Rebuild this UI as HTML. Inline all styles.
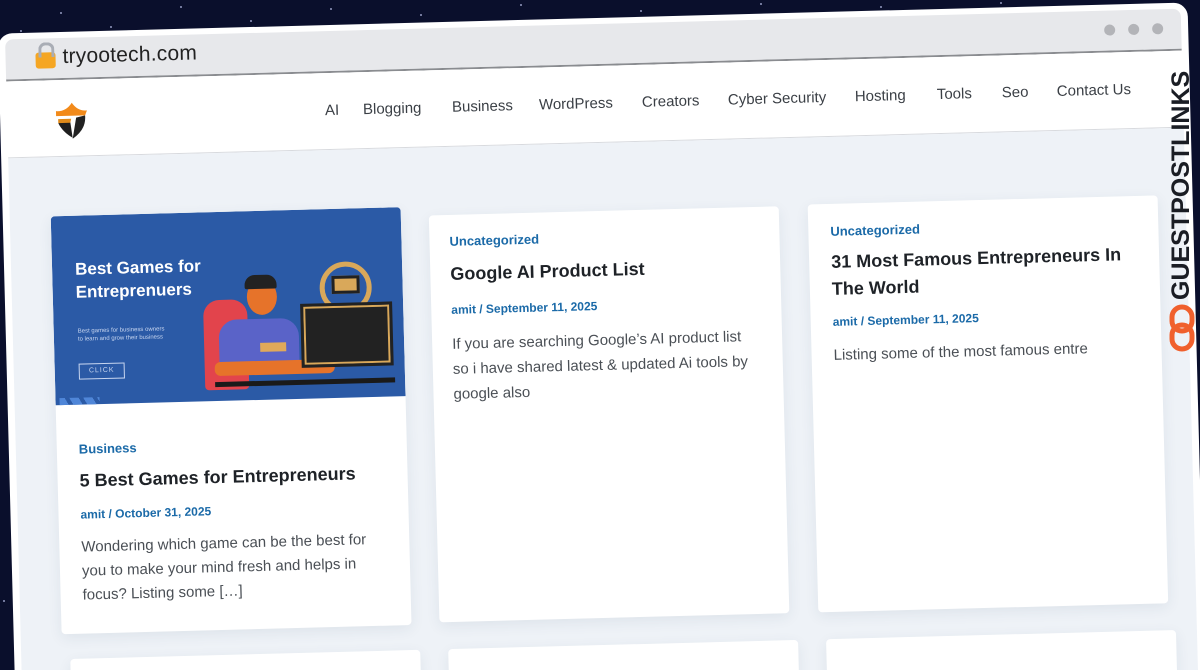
<!DOCTYPE html>
<html><head><meta charset="utf-8"><style>
*{margin:0;padding:0;box-sizing:border-box}
html,body{width:1200px;height:670px;overflow:hidden}
body{background:#0a0f2c;font-family:"Liberation Sans",sans-serif;position:relative}
.clip{position:absolute;left:0;top:0;width:1200px;height:670px;overflow:hidden}
.star{position:absolute;width:2px;height:2px;background:#cfd6ff;border-radius:50%;opacity:.7}
.page{position:absolute;left:0;top:0;width:1200px;height:670px;transform:rotate(-1.5deg);transform-origin:600px 335px}
.win{position:absolute;left:6px;top:18px;width:1190px;height:680px;background:#fff;border-radius:14px}
.tb{position:absolute;left:13px;top:24px;width:1176px;height:42px;background:#e7e8eb;border-radius:8px 8px 0 0;border-bottom:2px solid #8a8c90}
.url{position:absolute;left:70px;top:31px;font-size:21px;color:#222;letter-spacing:.2px}
.lock{position:absolute;left:43px;top:38px;width:20px;height:16px;background:#f5a623;border-radius:3px}
.lock:before{content:"";position:absolute;left:3px;top:-10px;width:10px;height:12px;border:3px solid #a9adb5;border-bottom:none;border-radius:7px 7px 0 0}
.dot{position:absolute;top:38px;width:11px;height:11px;border-radius:50%;background:#b3b4b8}
.hdr{position:absolute;left:13px;top:66px;width:1176px;height:77px;background:#fff;border-bottom:1px solid #d8dade}
.nav{position:absolute;top:95px;font-size:15px;color:#3a3f45;white-space:nowrap}
.main{position:absolute;left:13px;top:143px;width:1176px;height:560px;background:#eef2f7}
.card{position:absolute;background:#fff;border-radius:4px;box-shadow:0 4px 14px rgba(40,60,90,.08)}
.cat{position:absolute;font-size:13px;font-weight:bold;color:#1b6aa8}
.ttl{position:absolute;font-size:18px;font-weight:bold;color:#1e2227;line-height:27px}
.meta{position:absolute;font-size:12px;font-weight:bold;color:#1b6aa8}
.ex{position:absolute;font-size:15px;color:#4a4f55;line-height:25px}
</style></head><body><div class="clip">
<div class="star" style="left:60px;top:12px"></div><div class="star" style="left:180px;top:6px"></div><div class="star" style="left:250px;top:20px"></div><div class="star" style="left:330px;top:8px"></div><div class="star" style="left:420px;top:14px"></div><div class="star" style="left:520px;top:4px"></div><div class="star" style="left:640px;top:10px"></div><div class="star" style="left:760px;top:3px"></div><div class="star" style="left:880px;top:6px"></div><div class="star" style="left:20px;top:30px"></div><div class="star" style="left:1000px;top:2px"></div><div class="star" style="left:110px;top:26px"></div><div class="star" style="left:3px;top:600px"></div>
<div class="page">
<div class="win"></div>
<div class="tb"></div>
<div class="lock"></div>
<div class="url">tryootech.com</div>
<div class="dot" style="left:1112px"></div><div class="dot" style="left:1136px"></div><div class="dot" style="left:1160px"></div>
<div class="hdr"></div>
<svg style="position:absolute;left:58px;top:88px" width="38" height="38" viewBox="0 0 38 38"><path d="M4 9 Q14 10 20 1 Q26 10 35 9 L33 14 L4 14Z" fill="#f28a1a"/><path d="M33 14 Q34 28 20 37 L24 16Z" fill="#222"/><path d="M6 21 L18 20 L20 36 Q10 30 6 21Z" fill="#1e1e1e"/><path d="M6 17 L19 17 L18 21 L6 21Z" fill="#e08a1a"/></svg>
<div class="nav" style="left:331px">AI</div>
<div class="nav" style="left:369px">Blogging</div>
<div class="nav" style="left:458px">Business</div>
<div class="nav" style="left:545px">WordPress</div>
<div class="nav" style="left:648px">Creators</div>
<div class="nav" style="left:734px">Cyber Security</div>
<div class="nav" style="left:861px">Hosting</div>
<div class="nav" style="left:943px">Tools</div>
<div class="nav" style="left:1008px">Seo</div>
<div class="nav" style="left:1063px">Contact Us</div>
<div class="main"></div>

<div class="card" style="left:54px;top:202px;width:350px;height:418px;overflow:hidden">
 <div style="position:absolute;left:0;top:0;width:350px;height:189px;background:#2b5aa6">
  <div style="position:absolute;left:23px;top:42px;color:#fff;font-weight:bold;font-size:17px;line-height:23px">Best Games for<br>Entreprenuers</div>
  <div style="position:absolute;left:24px;top:112px;color:#c8d6f0;font-size:6px;line-height:8px">Best games for business owners<br>to learn and grow their business</div>
  <div style="position:absolute;left:24px;top:148px;width:46px;height:16px;border:1px solid #c8d6f0;color:#c8d6f0;font-size:7px;text-align:center;line-height:14px;letter-spacing:1px">CLICK</div>
  <div style="position:absolute;left:150px;top:88px;width:44px;height:90px;background:#e2444c;border-radius:16px 16px 4px 4px"></div>
  <div style="position:absolute;left:165px;top:108px;width:80px;height:55px;background:#5a63c8;border-radius:18px 18px 4px 4px"></div>
  <div style="position:absolute;left:194px;top:68px;width:30px;height:36px;background:#e6732a;border-radius:50%"></div>
  <div style="position:absolute;left:192px;top:64px;width:32px;height:14px;background:#222;border-radius:10px 10px 2px 2px"></div>
  <div style="position:absolute;left:206px;top:132px;width:26px;height:9px;background:#e0a95a"></div>
  <div style="position:absolute;left:160px;top:150px;width:120px;height:14px;background:#e6732a;border-radius:6px"></div>
  <div style="position:absolute;left:267px;top:53px;width:52px;height:52px;border:5px solid #d9a85a;border-radius:50%"></div>
  <div style="position:absolute;left:279px;top:67px;width:28px;height:18px;background:#d9a85a;border:3px solid #222"></div>
  <div style="position:absolute;left:250px;top:97px;width:86px;height:58px;background:#222;border:2px solid #d9a85a;outline:3px solid #222"></div>
  <div style="position:absolute;left:160px;top:170px;width:180px;height:5px;background:#1a1a1a"></div>
  <div style="position:absolute;left:4px;top:182px;width:40px;height:7px;background:repeating-linear-gradient(60deg,#4f86d8 0 8px,transparent 8px 12px)"></div>
 </div>
 <div class="cat" style="left:22px;top:226px">Business</div>
 <div class="ttl" style="left:22px;top:252px">5 Best Games for Entrepreneurs</div>
 <div class="meta" style="left:22px;top:292px">amit / October 31, 2025</div>
 <div class="ex" style="left:22px;top:320px;line-height:24px">Wondering which game can be the best for<br>you to make your mind fresh and helps in<br>focus? Listing some […]</div>
</div>

<div class="card" style="left:432px;top:211px;width:350px;height:407px">
 <div class="cat" style="left:20px;top:19px">Uncategorized</div>
 <div class="ttl" style="left:20px;top:46px">Google AI Product List</div>
 <div class="meta" style="left:20px;top:88px">amit / September 11, 2025</div>
 <div class="ex" style="left:20px;top:117px">If you are searching Google’s AI product list<br>so i have shared latest &amp; updated Ai tools by<br>google also</div>
</div>

<div class="card" style="left:811px;top:210px;width:350px;height:408px">
 <div class="cat" style="left:22px;top:20px">Uncategorized</div>
 <div class="ttl" style="left:22px;top:45px">31 Most Famous Entrepreneurs In<br>The World</div>
 <div class="meta" style="left:22px;top:111px">amit / September 11, 2025</div>
 <div class="ex" style="left:22px;top:139px">Listing some of the most famous entre</div>
</div>

<div class="card" style="left:62px;top:645px;width:350px;height:60px"></div>
<div class="card" style="left:440px;top:645px;width:350px;height:60px"></div>
<div class="card" style="left:818px;top:645px;width:350px;height:60px"></div>
</div>

<div style="position:absolute;left:1167px;top:300px;transform:rotate(-90deg);transform-origin:0 0;font-weight:bold;font-size:25px;color:#1a1d24;white-space:nowrap;line-height:28px">GUESTPOSTLINKS</div>
<svg style="position:absolute;left:1168px;top:304px" width="28" height="48" viewBox="0 0 28 48"><rect x="4" y="3" width="20" height="24" rx="10" fill="none" stroke="#f0602d" stroke-width="5"/><rect x="4" y="21" width="20" height="24" rx="10" fill="none" stroke="#f0602d" stroke-width="5"/></svg>
</div></body></html>
